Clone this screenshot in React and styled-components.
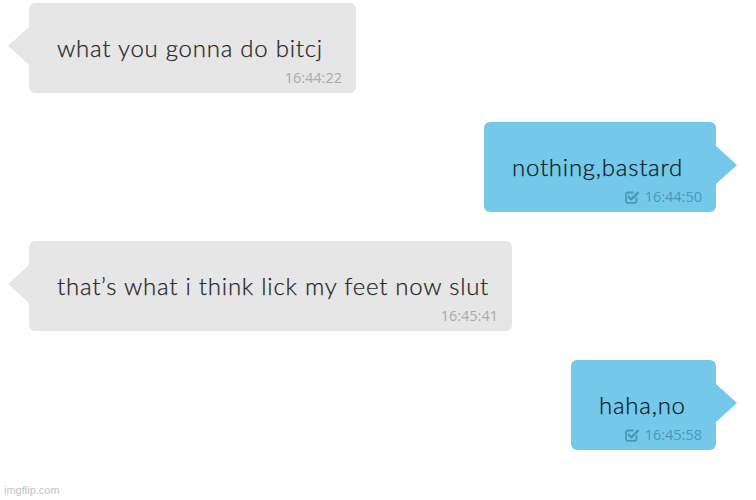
import React from "react";
import styled, { createGlobalStyle } from "styled-components";

const GlobalStyle = createGlobalStyle`
  html, body {
    margin: 0;
    padding: 0;
    background: #ffffff;
  }
  body {
    width: 756px;
    height: 500px;
    overflow: hidden;
  }
`;

const messages = [
  { id: 1, mine: false, text: "what you gonna do bitcj", time: "16:44:22", width: 327 },
  { id: 2, mine: true, text: "nothing,bastard", time: "16:44:50", width: 232 },
  { id: 3, mine: false, text: "that’s what i think lick my feet now slut", time: "16:45:41", width: 483 },
  { id: 4, mine: true, text: "haha,no", time: "16:45:58", width: 145 },
];

const Page = styled.div`
  position: relative;
  width: 756px;
  height: 500px;
  box-sizing: border-box;
  padding: 3px 19px 0 8px;
  display: flex;
  flex-direction: column;
  gap: 29px;
  background: #ffffff;
`;

const Row = styled.div`
  display: flex;
  justify-content: ${(p) => (p.$mine ? "flex-end" : "flex-start")};
`;

const Bubble = styled.div`
  position: relative;
  box-sizing: border-box;
  height: 90px;
  margin-left: ${(p) => (p.$mine ? "0" : "21px")};
  margin-right: ${(p) => (p.$mine ? "21px" : "0")};
  padding: 0 14px 0 28px;
  border-radius: 6px;
  background: ${(p) => (p.$mine ? "#74c9ea" : "#e6e6e6")};
  display: flex;
  flex-direction: column;

  &::before {
    content: "";
    position: absolute;
    top: 24px;
    ${(p) => (p.$mine ? "right: -21px;" : "left: -21px;")}
    border-top: 19px solid transparent;
    border-bottom: 19px solid transparent;
    ${(p) =>
      p.$mine
        ? "border-left: 21px solid #74c9ea;"
        : "border-right: 21px solid #e6e6e6;"}
  }
`;

const Text = styled.div`
  margin-top: 31px;
  font-family: "Lato", "Noto Sans", sans-serif;
  font-weight: 300;
  font-size: 24px;
  line-height: 28px;
  color: ${(p) => (p.$mine ? "#0f1a20" : "#262626")};
  white-space: nowrap;
  letter-spacing: 0.75px;
  -webkit-text-stroke: 0.25px currentColor;
`;

const Meta = styled.div`
  margin-top: 8px;
  align-self: flex-end;
  display: flex;
  align-items: center;
  gap: 5px;
  font-family: "Open Sans", "Liberation Sans", sans-serif;
  font-size: 14.5px;
  line-height: 16px;
  color: ${(p) => (p.$mine ? "#4a97b8" : "#ababab")};
`;

const Watermark = styled.div`
  position: absolute;
  left: 4px;
  bottom: 4px;
  font-family: "Liberation Sans", Arial, sans-serif;
  font-size: 11px;
  color: #c4c4c4;
`;

const CheckIcon = () => (
  <svg width="15" height="14" viewBox="0 0 15 14">
    <path
      d="M11.5 7.5 V11 a1.8 1.8 0 0 1 -1.8 1.8 H2.8 a1.8 1.8 0 0 1 -1.8 -1.8 V4.3 a1.8 1.8 0 0 1 1.8 -1.8 H8.5"
      fill="none"
      stroke="currentColor"
      strokeWidth="1.8"
    />
    <path
      d="M3.8 6.8 L6.3 9.3 L12.8 2.8"
      fill="none"
      stroke="currentColor"
      strokeWidth="2.4"
      strokeLinecap="round"
      strokeLinejoin="round"
    />
  </svg>
);

const Message = ({ mine, text, time, width }) => (
  <Row $mine={mine}>
    <Bubble $mine={mine} style={{ width }}>
      <Text $mine={mine}>{text}</Text>
      <Meta $mine={mine}>
        {mine && <CheckIcon />}
        <span>{time}</span>
      </Meta>
    </Bubble>
  </Row>
);

const App = () => (
  <>
    <GlobalStyle />
    <Page>
      {messages.map((m) => (
        <Message key={m.id} {...m} />
      ))}
      <Watermark>imgflip.com</Watermark>
    </Page>
  </>
);

export default App;
